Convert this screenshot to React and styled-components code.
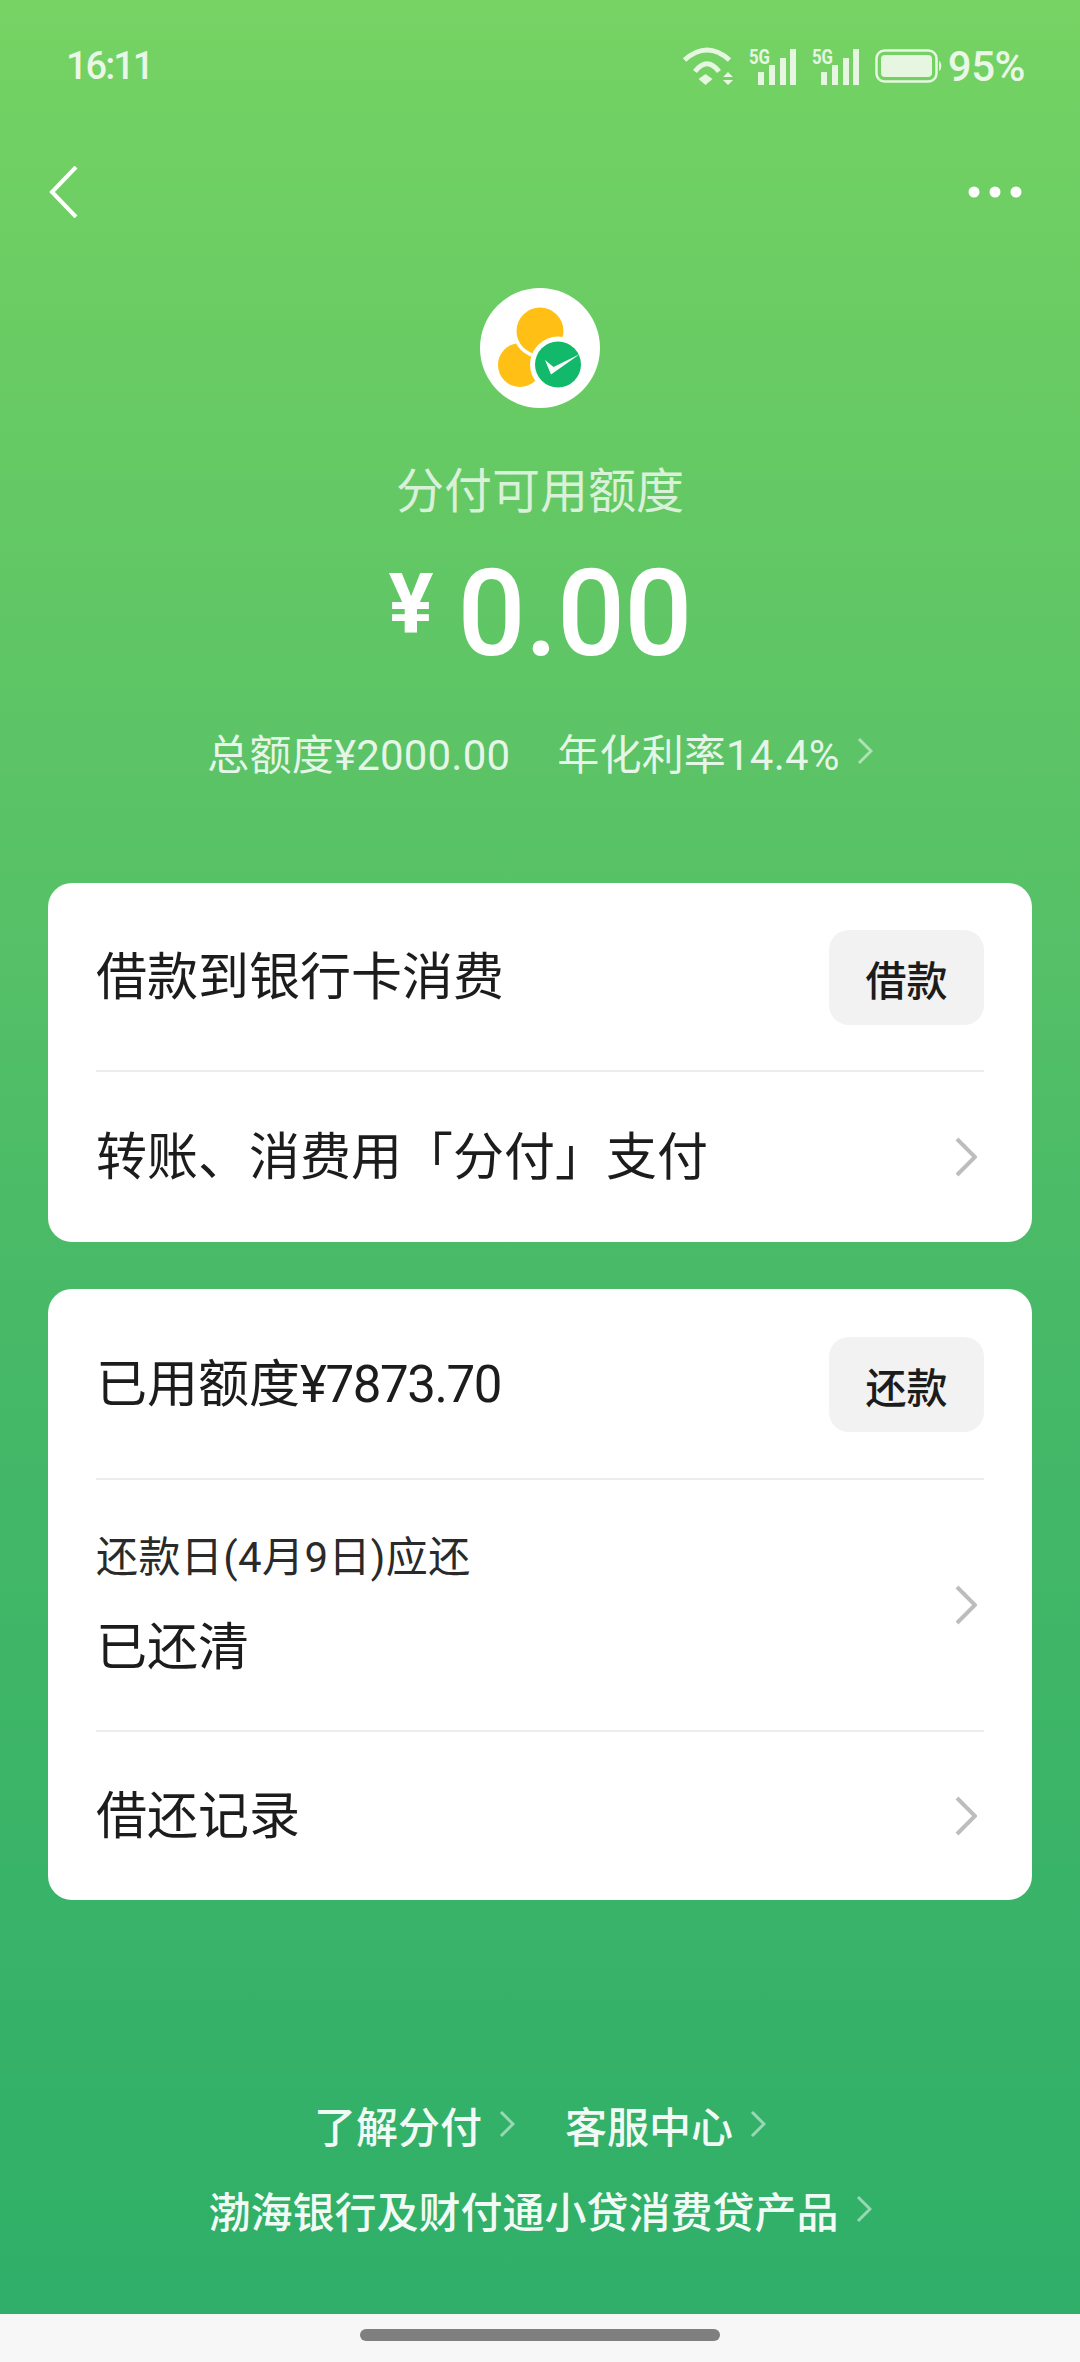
import React from 'react';
import styled, { createGlobalStyle } from 'styled-components';

const GlobalStyle = createGlobalStyle`
  html, body {
    margin: 0;
    padding: 0;
  }
  body {
    font-family: Roboto, "Noto Sans CJK SC", sans-serif;
  }
`;

const Page = styled.div`
  width: 1080px;
  height: 2362px;
  display: flex;
  flex-direction: column;
  background: linear-gradient(180deg, #76d364 0%, #6bcd63 12%, #57c167 38%, #47b967 56%, #2faf69 98%);
  overflow: hidden;
`;

const StatusBar = styled.div`
  height: 132px;
  padding: 0 55px 0 66px;
  display: flex;
  align-items: center;
  justify-content: space-between;
  color: rgba(255, 255, 255, 0.85);
`;

const Clock = styled.span`
  font-size: 38px;
  font-weight: 500;
  letter-spacing: -2px;
`;

const StatusIcons = styled.div`
  display: flex;
  align-items: center;
  gap: 16px;
`;

const BatteryGroup = styled.div`
  display: flex;
  align-items: center;
  gap: 5px;
`;

const Percent = styled.span`
  font-size: 42px;
  font-weight: 500;
  letter-spacing: -0.5px;
`;

const NavBar = styled.div`
  height: 120px;
  padding: 0 58px 0 48px;
  display: flex;
  align-items: center;
  justify-content: space-between;
`;

const Hero = styled.div`
  display: flex;
  flex-direction: column;
  align-items: center;
  padding-top: 36px;
`;

const Logo = styled.svg`
  width: 120px;
  height: 120px;
  display: block;
`;

const HeroLabel = styled.div`
  margin-top: 54px;
  font-size: 48px;
  line-height: 60px;
  color: rgba(255, 255, 255, 0.75);
`;

const Amount = styled.div`
  margin-top: 17px;
  height: 150px;
  display: flex;
  align-items: center;
  color: #fff;
`;

const AmountUnit = styled.span`
  font-size: 84px;
  font-weight: 700;
  margin-right: 24px;
  margin-top: -20px;
`;

const AmountValue = styled.span`
  font-size: 120px;
  font-weight: 500;
  letter-spacing: -1px;
`;

const Terms = styled.div`
  margin-top: 34px;
  height: 56px;
  display: flex;
  align-items: center;
  font-size: 42px;
  letter-spacing: 0.2px;
  color: rgba(255, 255, 255, 0.85);
`;

const TermItem = styled.span`
  margin-right: ${(p) => p.$gap || 0}px;
`;

const Cards = styled.div`
  margin-top: 104px;
  padding: 0 48px;
  display: flex;
  flex-direction: column;
  gap: 47px;
`;

const Card = styled.div`
  background: #fff;
  border-radius: 24px;
  padding: 0 48px;
`;

const Row = styled.div`
  height: ${(p) => p.$height}px;
  display: flex;
  align-items: center;
  justify-content: space-between;
  border-bottom: ${(p) => (p.$divider ? '2px solid #ececec' : 'none')};
`;

const RowTitle = styled.span`
  font-size: 51px;
  padding-bottom: 8px;
  color: #1c1c1c;
`;

const Digits = styled.span`
  letter-spacing: -1.4px;
`;

const RowStack = styled.div`
  display: flex;
  flex-direction: column;
  gap: 22px;
  margin-top: 10px;
`;

const RowCaption = styled.span`
  font-size: 42px;
  line-height: 52px;
  letter-spacing: 0.4px;
  color: #2a2a2a;
`;

const ActionButton = styled.button`
  width: 155px;
  height: 95px;
  margin-top: 2px;
  border: none;
  border-radius: 20px;
  background: #f2f2f2;
  color: #1c1c1c;
  font-family: inherit;
  font-size: 41px;
  font-weight: 500;
  padding: 0;
`;

const Footer = styled.div`
  margin-top: auto;
  padding-bottom: 75px;
  display: flex;
  flex-direction: column;
  align-items: center;
  gap: 25px;
`;

const FooterLine = styled.div`
  height: 60px;
  display: flex;
  align-items: center;
  gap: 50px;
`;

const FooterLink = styled.span`
  display: flex;
  align-items: center;
  gap: 17px;
  font-size: 42px;
  font-weight: 500;
  color: rgba(255, 255, 255, 0.95);
`;

const HomeArea = styled.div`
  height: 48px;
  background: #f7f7f7;
  display: flex;
  justify-content: center;
  padding-top: 15px;
  box-sizing: border-box;
`;

const HomeHandle = styled.div`
  width: 360px;
  height: 12px;
  border-radius: 6px;
  background: #7f7f7f;
`;

const ChevronSvg = styled.svg`
  flex: none;
  margin-right: ${(p) => p.$mr || 0}px;
`;

const Chevron = ({ w = 16, h = 28, color = 'rgba(255,255,255,0.5)', sw = 3, mr = 0 }) => (
  <ChevronSvg $mr={mr} width={w} height={h} viewBox={`0 0 ${w} ${h}`} fill="none">
    <path d={`M2 2 L${w - 2} ${h / 2} L2 ${h - 2}`} stroke={color} strokeWidth={sw} />
  </ChevronSvg>
);

const WifiIcon = () => (
  <svg width="51" height="40" viewBox="0 0 51 40" fill="none">
    <path d="M2.5 14 Q25 -6 47.5 14" stroke="#e6f6e1" strokeWidth="5" />
    <path d="M13 25.5 Q25 10 37 25.5" stroke="#e6f6e1" strokeWidth="5" />
    <path d="M16.5 33 L23.5 28 L30.5 33 L23.5 39 Z" fill="#e6f6e1" />
    <path d="M41 31 L46 26 L51 31 Z M41 34 L51 34 L46 39 Z" fill="#e6f6e1" />
  </svg>
);

const SignalIcon = () => (
  <svg width="47" height="42" viewBox="0 0 47 42" fill="#e6f6e1">
    <text x="0" y="19" fontFamily="Roboto, sans-serif" fontSize="20" fontWeight="700" textLength="21" lengthAdjust="spacingAndGlyphs">5G</text>
    <rect x="9" y="27" width="6" height="13" />
    <rect x="20" y="20" width="6" height="20" />
    <rect x="31" y="13" width="6" height="27" />
    <rect x="41" y="4" width="6" height="36" />
  </svg>
);

const BatteryIcon = () => (
  <svg width="68" height="34" viewBox="0 0 68 34" fill="none">
    <rect x="1.5" y="1.5" width="60" height="31" rx="8" stroke="#e6f6e1" strokeWidth="2.5" />
    <rect x="6" y="6" width="51" height="22" rx="4" fill="#e6f6e1" />
    <path d="M64 12 C67 13 67 21 64 22 Z" fill="#e6f6e1" />
  </svg>
);

const BackIcon = () => (
  <svg width="30" height="52" viewBox="0 0 30 52" fill="none">
    <path d="M28 1 L4 26 L28 51" stroke="#fff" strokeWidth="4" />
  </svg>
);

const MoreIcon = () => (
  <svg width="54" height="12" viewBox="0 0 54 12" fill="#fff">
    <circle cx="6" cy="6" r="5.5" />
    <circle cx="27" cy="6" r="5.5" />
    <circle cx="48" cy="6" r="5.5" />
  </svg>
);

const App = () => (
  <>
    <GlobalStyle />
    <Page>
      <StatusBar>
        <Clock>16:11</Clock>
        <StatusIcons>
          <WifiIcon />
          <SignalIcon />
          <SignalIcon />
          <BatteryGroup>
            <BatteryIcon />
            <Percent>95%</Percent>
          </BatteryGroup>
        </StatusIcons>
      </StatusBar>

      <NavBar>
        <BackIcon />
        <MoreIcon />
      </NavBar>

      <Hero>
        <Logo viewBox="0 0 120 120">
          <circle cx="60" cy="60" r="60" fill="#fff" />
          <circle cx="40" cy="77" r="22" fill="#ffbf14" />
          <circle cx="60" cy="43" r="27" fill="#fff" />
          <circle cx="60" cy="43" r="23.5" fill="#ffbf14" />
          <circle cx="78" cy="76.5" r="28" fill="#fff" />
          <circle cx="78" cy="76.5" r="23" fill="#12b96a" />
          <path d="M65 72 L73.5 79 L100 66 L71 86.5 Z" fill="#fff" />
        </Logo>
        <HeroLabel>分付可用额度</HeroLabel>
        <Amount>
          <AmountUnit>¥</AmountUnit>
          <AmountValue>0.00</AmountValue>
        </Amount>
        <Terms>
          <TermItem $gap={47}>总额度¥2000.00</TermItem>
          <TermItem $gap={17}>年化利率14.4%</TermItem>
          <Chevron />
        </Terms>
      </Hero>

      <Cards>
        <Card>
          <Row $height={187} $divider>
            <RowTitle>借款到银行卡消费</RowTitle>
            <ActionButton>借款</ActionButton>
          </Row>
          <Row $height={170}>
            <RowTitle>转账、消费用「分付」支付</RowTitle>
            <Chevron w={22} h={40} color="#bdbdbd" sw={4} mr={7} />
          </Row>
        </Card>

        <Card>
          <Row $height={189} $divider>
            <RowTitle>已用额度<Digits>¥7873.70</Digits></RowTitle>
            <ActionButton>还款</ActionButton>
          </Row>
          <Row $height={250} $divider>
            <RowStack>
              <RowCaption>还款日(4月9日)应还</RowCaption>
              <RowTitle>已还清</RowTitle>
            </RowStack>
            <Chevron w={22} h={40} color="#bdbdbd" sw={4} mr={7} />
          </Row>
          <Row $height={168}>
            <RowTitle>借还记录</RowTitle>
            <Chevron w={22} h={40} color="#bdbdbd" sw={4} mr={7} />
          </Row>
        </Card>
      </Cards>

      <Footer>
        <FooterLine>
          <FooterLink>了解分付<Chevron /></FooterLink>
          <FooterLink>客服中心<Chevron /></FooterLink>
        </FooterLine>
        <FooterLine>
          <FooterLink>渤海银行及财付通小贷消费贷产品<Chevron /></FooterLink>
        </FooterLine>
      </Footer>

      <HomeArea>
        <HomeHandle />
      </HomeArea>
    </Page>
  </>
);

export default App;
